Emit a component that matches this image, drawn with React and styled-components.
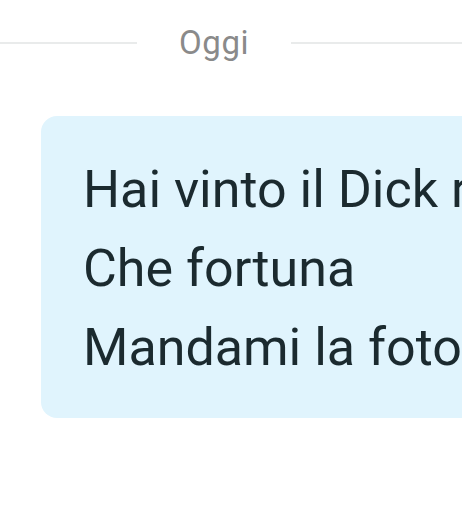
import React from "react";
import styled, { createGlobalStyle } from "styled-components";

const Global = createGlobalStyle`
  html, body { margin: 0; padding: 0; background: #ffffff; }
  body { font-family: Roboto, "Noto Sans", sans-serif; overflow: hidden; }
  #root { width: 462px; height: 512px; overflow: hidden; }
`;

const Screen = styled.div`
  width: 462px;
  height: 512px;
  overflow: hidden;
  background: #ffffff;
  display: flex;
  flex-direction: column;
`;

const DayDivider = styled.div`
  display: flex;
  align-items: center;
  gap: 42px;
  height: 30px;
  margin-top: 28px;
`;

const Rule = styled.div`
  flex: ${(p) => (p.$grow ? 1 : "0 0 " + p.$w + "px")};
  height: 2px;
  background: #e9ebeb;
`;

const DayLabel = styled.span`
  font-size: 33px;
  color: #8a8a8a;
  line-height: 30px;
  letter-spacing: 0.6px;
`;

const Bubble = styled.div`
  margin: 58px 0 0 41px;
  width: 520px;
  height: 302px;
  box-sizing: border-box;
  background: #e0f4fd;
  border-radius: 16px;
  padding: 34px 0 0 42px;
  white-space: nowrap;
`;

const Line = styled.div`
  font-size: 52px;
  line-height: 79px;
  color: #1b2a2f;
`;

export default function App() {
  return (
    <>
      <Global />
      <Screen>
        <DayDivider>
          <Rule $w={137} />
          <DayLabel>Oggi</DayLabel>
          <Rule $grow />
        </DayDivider>
        <Bubble>
          <Line>Hai vinto il Dick rosa</Line>
          <Line>Che fortuna</Line>
          <Line>Mandami la foto</Line>
        </Bubble>
      </Screen>
    </>
  );
}
